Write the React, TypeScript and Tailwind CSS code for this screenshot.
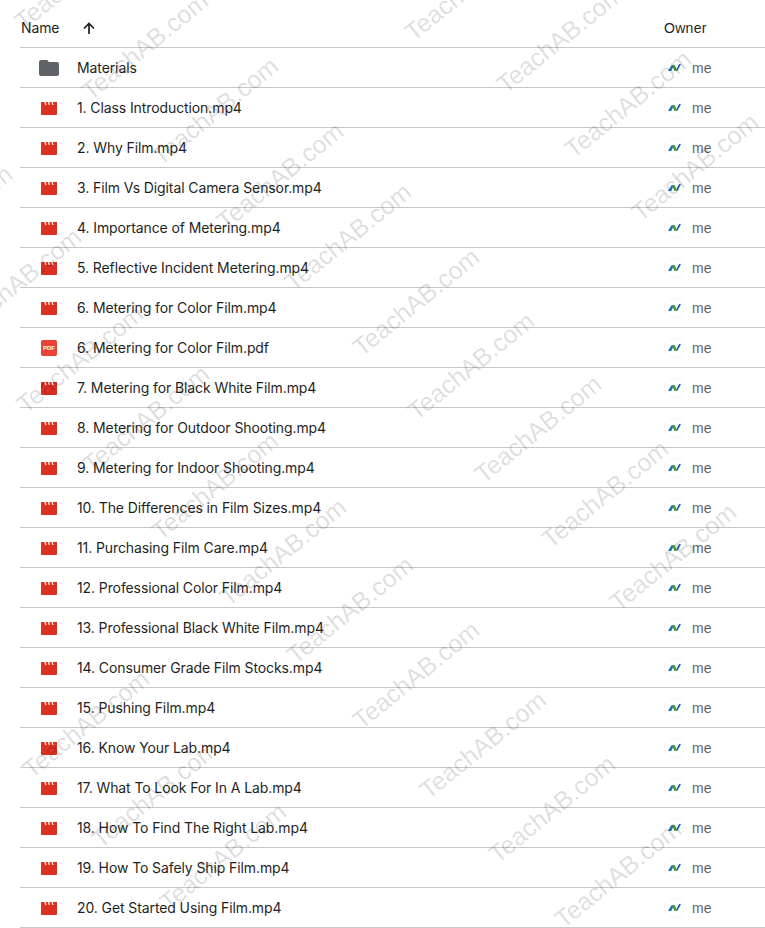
const files = [
  '1. Class Introduction.mp4',
  '2. Why Film.mp4',
  '3. Film Vs Digital Camera Sensor.mp4',
  '4. Importance of Metering.mp4',
  '5. Reflective Incident Metering.mp4',
  '6. Metering for Color Film.mp4',
  '6. Metering for Color Film.pdf',
  '7. Metering for Black White Film.mp4',
  '8. Metering for Outdoor Shooting.mp4',
  '9. Metering for Indoor Shooting.mp4',
  '10. The Differences in Film Sizes.mp4',
  '11. Purchasing Film Care.mp4',
  '12. Professional Color Film.mp4',
  '13. Professional Black White Film.mp4',
  '14. Consumer Grade Film Stocks.mp4',
  '15. Pushing Film.mp4',
  '16. Know Your Lab.mp4',
  '17. What To Look For In A Lab.mp4',
  '18. How To Find The Right Lab.mp4',
  '19. How To Safely Ship Film.mp4',
  '20. Get Started Using Film.mp4',
];

// bottom-left corner of the T in each watermark stamp
const stamps = [
  [15, 27], [82, 97], [152, 162], [217, 227], [285, 288], [353, 353], [408, 417], [475, 480], [542, 545], [610, 608],
  [405, 38], [497, 90], [565, 155], [632, 218],
  [-114, 270], [-45, 333], [17, 410],
  [83, 470], [152, 537], [220, 603], [287, 661], [353, 726], [420, 796], [489, 860], [555, 925],
  [23, 775], [92, 845], [160, 908],
];

function FolderIcon() {
  return (
    <svg width="20" height="16" viewBox="0 0 20 16" className="block">
      <path d="M2 0h6l2 2h8a2 2 0 0 1 2 2v10a2 2 0 0 1-2 2H2a2 2 0 0 1-2-2V2a2 2 0 0 1 2-2z" fill="#5f6368" />
    </svg>
  );
}

function VideoIcon() {
  return (
    <svg width="16" height="13" viewBox="0 0 16 13" className="ml-[2px] mt-[2px] block">
      <path d="M0 0H16V12a1 1 0 0 1-1 1H1a1 1 0 0 1-1-1z" fill="#dc3023" />
      <path d="M4 0l1 3M7.5 0l1 3M11 0l1 3" stroke="#fff" strokeWidth="1.2" />
    </svg>
  );
}

function PdfIcon() {
  return (
    <div className="ml-[2px] mt-[1px] flex h-4 w-4 items-center justify-center rounded-[2px] bg-[#ea4335] font-['Liberation_Sans',sans-serif] text-[6px] font-bold leading-none text-white">
      PDF
    </div>
  );
}

function Avatar() {
  return (
    <div className="flex h-5 w-5 items-center justify-center rounded-full border border-[#f6f6f6] bg-white">
      <svg width="13" height="7" viewBox="0 0 13 7">
        <path d="M0 7 L3.5 1.2 L6 1.2 L3.2 7z" fill="#1f6fb0" />
        <path d="M4 1 L6.5 1 L9.2 6.4 L6.4 7z" fill="#4a9a2f" />
        <path d="M8 6.2 L11 0 L13 0.3 L9.5 6.8z" fill="#1668a8" />
      </svg>
    </div>
  );
}

function Row({ name, icon }: { name: string; icon: React.ReactNode }) {
  return (
    <div className="flex h-10 items-center border-b border-[#c7c7c7]">
      <div className="w-[57px] shrink-0 pl-[19px]">{icon}</div>
      <div className="flex-1 text-[14px] tracking-[-0.1px] text-[#1f1f1f]">{name}</div>
      <div className="flex w-[101px] shrink-0 items-center gap-2 -ml-[1px]">
        <Avatar />
        <span className="pt-[2px] font-['Liberation_Sans',sans-serif] text-[14px] text-[#5f6368]">me</span>
      </div>
    </div>
  );
}

export default function App() {
  return (
    <div className="relative h-[928px] w-[765px] overflow-hidden bg-white pl-5 font-['Inter',sans-serif]">
      <div className="flex h-12 items-center border-b border-[#c7c7c7] pt-[8px] text-[14px] tracking-[-0.1px] text-[#1f1f1f]">
        <div className="pl-[1px]">Name</div>
        <svg className="ml-[24px]" width="12" height="12" viewBox="0 0 12 12" fill="none" stroke="#1f1f1f" strokeWidth="1.7">
          <path d="M6 12V1.5M1 6.5l5-5 5 5" />
        </svg>
        <div className="ml-auto w-[101px] pt-[1px] font-['Liberation_Sans',sans-serif] tracking-[0.3px]">Owner</div>
      </div>
      <Row name="Materials" icon={<FolderIcon />} />
      {files.map((f) => (
        <Row key={f} name={f} icon={f.endsWith('.pdf') ? <PdfIcon /> : <VideoIcon />} />
      ))}
      {stamps.map(([x, y]) => (
        <div
          key={`${x}-${y}`}
          className="pointer-events-none absolute -translate-x-1/2 -translate-y-1/2 -rotate-[39deg] whitespace-nowrap font-['Liberation_Sans',sans-serif] text-[25px] leading-none text-black/15"
          style={{ left: x + 63, top: y - 51 }}
        >
          TeachAB.com
        </div>
      ))}
    </div>
  );
}
